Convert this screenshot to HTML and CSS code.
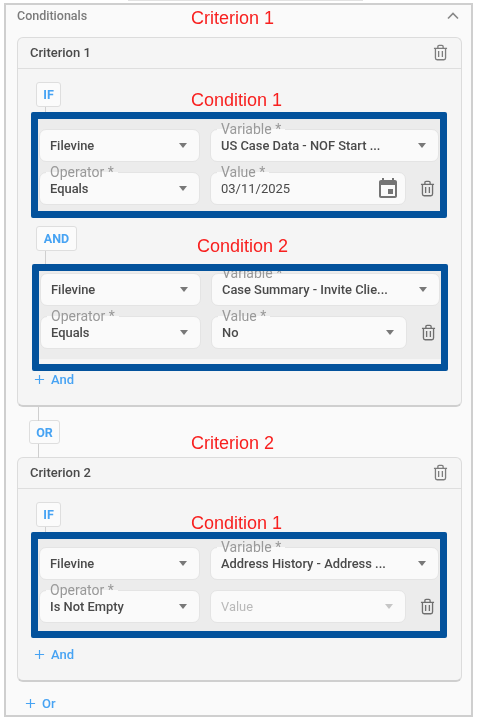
FILE: index.html
```html
<!DOCTYPE html>
<html lang="en">
<head>
    <meta charset="UTF-8" />
    <title>Conditionals</title>
    <link rel="stylesheet" href="styles.css">
</head>
<body>

<svg class="defs" width="0" height="0">
    <symbol id="trash" viewBox="0 0 16 18">
        <path d="M1 4.5h14M5.2 4.5V2.6c0-.8.5-1.3 1.3-1.3h3c.8 0 1.3.5 1.3 1.3v1.9M2.6 4.5v10.4c0 1 .7 1.8 1.8 1.8h7.2c1.1 0 1.8-.8 1.8-1.8V4.5M6 7.5v6.2M10 7.5v6.2" fill="none" stroke="currentColor" stroke-width="1.4"/>
    </symbol>
    <symbol id="calendar" viewBox="0 0 24 24">
        <path d="M17 12h-5v5h5v-5zM16 1v2H8V1H6v2H5c-1.11 0-1.99.9-1.99 2L3 19c0 1.1.89 2 2 2h14c1.1 0 2-.9 2-2V5c0-1.1-.9-2-2-2h-1V1h-2zm3 18H5V8h14v11z" fill="currentColor"/>
    </symbol>
    <symbol id="plus" viewBox="0 0 12 12">
        <path d="M6 1v10M1 6h10" fill="none" stroke="currentColor" stroke-width="1.3"/>
    </symbol>
</svg>

<div class="top-tab"></div>

<div class="panel">
    <div class="panel-head">
        <span>Conditionals</span>
        <svg class="chevron" width="12" height="8" viewBox="0 0 12 8"><path d="M1 6.5l5-5 5 5" fill="none" stroke="currentColor" stroke-width="1.6"/></svg>
    </div>

    <!-- criterion 1 -->
    <div class="card">
        <div class="card-head">
            <span>Criterion 1</span>
            <svg class="trash-lg"><use href="#trash"/></svg>
        </div>
        <div class="card-body">
            <div class="chip chip-if">IF</div>
            <div class="cond">
                <div class="row">
                    <div class="field w-source"><span>Filevine</span><i class="caret"></i></div>
                    <div class="field w-var"><label>Variable *</label><span>US Case Data - NOF Start ...</span><i class="caret"></i></div>
                </div>
                <div class="row">
                    <div class="field w-source"><label>Operator *</label><span>Equals</span><i class="caret"></i></div>
                    <div class="field w-val"><label>Value *</label><span class="plain">03/11/2025</span>
                        <svg class="cal"><use href="#calendar"/></svg>
                    </div>
                    <svg class="trash-sm"><use href="#trash"/></svg>
                </div>
            </div>
            <div class="chip chip-and">AND</div>
            <div class="cond cond-second">
                <div class="row">
                    <div class="field w-source"><span>Filevine</span><i class="caret"></i></div>
                    <div class="field w-var"><label class="label-cut">Variable *</label><span>Case Summary - Invite Clie...</span><i class="caret"></i></div>
                </div>
                <div class="row">
                    <div class="field w-source"><label>Operator *</label><span>Equals</span><i class="caret"></i></div>
                    <div class="field w-val"><label>Value *</label><span>No</span><i class="caret"></i></div>
                    <svg class="trash-sm"><use href="#trash"/></svg>
                </div>
            </div>
            <a class="add add-and-1"><svg><use href="#plus"/></svg>And</a>
        </div>
    </div>

    <div class="chip chip-or">OR</div>

    <!-- criterion 2 -->
    <div class="card card-second">
        <div class="card-head">
            <span>Criterion 2</span>
            <svg class="trash-lg"><use href="#trash"/></svg>
        </div>
        <div class="card-body">
            <div class="chip chip-if">IF</div>
            <div class="cond cond-third">
                <div class="row">
                    <div class="field w-source"><span>Filevine</span><i class="caret"></i></div>
                    <div class="field w-var"><label>Variable *</label><span>Address History - Address ...</span><i class="caret"></i></div>
                </div>
                <div class="row">
                    <div class="field w-source"><label>Operator *</label><span>Is Not Empty</span><i class="caret"></i></div>
                    <div class="field w-val field-off"><span>Value</span><i class="caret"></i></div>
                    <svg class="trash-sm"><use href="#trash"/></svg>
                </div>
            </div>
            <a class="add add-and-2"><svg><use href="#plus"/></svg>And</a>
        </div>
    </div>

    <a class="add add-or"><svg><use href="#plus"/></svg>Or</a>
</div>

<!-- red notes written over the screenshot -->
<div class="note note-1">Criterion 1</div>
<div class="note note-2">Condition 1</div>
<div class="note note-3">Condition 2</div>
<div class="note note-4">Criterion 2</div>
<div class="note note-5">Condition 1</div>

</body>
</html>
```

FILE: styles.css
```css
body {
    margin: 0;
    background: #fff;
    font-family: Roboto, Arial, sans-serif;
    color: #444;
    filter: blur(0.4px);
}
.defs {
    display: block;
    height: 0;
}
.top-tab {
    width: 235px;
    height: 1px;
    margin: 0 0 2px 128px;
    background: #e2e2e2;
}
.panel {
    box-sizing: border-box;
    width: 469px;
    height: 714px;
    margin-left: 4px;
    padding: 0 9px 0 11px;
    border: 2px solid #cfcfcf;
    background: #fafafa;
}
.panel-head {
    display: flex;
    justify-content: space-between;
    height: 22px;
    margin-bottom: 10px;
    padding: 3px 3px 0 0;
    box-sizing: border-box;
    font-size: 12.5px;
    line-height: 15px;
    font-weight: 500;
    color: #7b7b7b;
}
.chevron {
    margin-top: 4px;
    color: #888;
}
.card {
    box-sizing: border-box;
    height: 370px;
    border: 1px solid #dcdcdc;
    border-bottom: 2px solid #cfcfcf;
    border-radius: 6px;
    background: #f5f5f5;
}
.card-second {
    height: 225px;
    margin-top: 13px;
}
.card-head {
    box-sizing: border-box;
    display: flex;
    align-items: center;
    justify-content: space-between;
    height: 31px;
    padding: 0 13px 2px 12px;
    border-bottom: 1px solid #dedede;
    font-size: 13px;
    font-weight: 500;
    color: #4a4a4a;
}
.card-body {
    padding: 13px 0 0 13px;
}
.trash-lg {
    width: 15px;
    height: 17px;
    color: #7d7d7d;
}
.trash-sm {
    flex: none;
    width: 15px;
    height: 17px;
    margin-left: 4px;
    color: #6f6f6f;
}
.chip {
    position: relative;
    box-sizing: border-box;
    display: flex;
    align-items: center;
    justify-content: center;
    height: 25px;
    border: 1px solid #dedede;
    border-radius: 3px;
    background: #fbfbfb;
    font-size: 12.5px;
    font-weight: 700;
    color: #47a3f3;
}
.chip::after {
    content: "";
    position: absolute;
    left: 8px;
    top: 24px;
    width: 1px;
    height: 6px;
    background: #cfcfcf;
}
.chip-if {
    width: 25px;
    margin-left: 5px;
}
.chip-and {
    width: 41px;
    margin: 8px 0 0 5px;
}
.chip-and::after {
    height: 14px;
}
.chip-or {
    width: 31px;
    margin: 13px 0 0 12px;
    height: 24px;
}
.chip-or::before {
    content: "";
    position: absolute;
    left: 8px;
    top: -14px;
    width: 1px;
    height: 14px;
    background: #cfcfcf;
}
.chip-or::after {
    height: 14px;
    top: 23px;
}
.cond {
    position: relative;
    box-sizing: border-box;
    display: flex;
    flex-direction: column;
    gap: 10px;
    width: 416px;
    height: 106px;
    margin-top: 5px;
    padding: 10px 0 0 1px;
    border: 7px solid #03529c;
    border-radius: 2px;
    background: #ececec;
}
.cond-second {
    height: 107px;
    margin: 13px 0 0 1px;
    padding-top: 2px;
    background: linear-gradient(#ececec 88px, #f5f5f5 88px);
}
.cond-third {
    padding-top: 8px;
}
.row {
    display: flex;
    align-items: center;
    gap: 10px;
}
.field {
    position: relative;
    flex: none;
    box-sizing: border-box;
    display: flex;
    align-items: center;
    justify-content: space-between;
    height: 33px;
    padding: 0 12px 0 10px;
    border: 1px solid #e4e4e4;
    border-radius: 7px;
    background: #fafafa;
    font-size: 12.9px;
    font-weight: 500;
    color: #4a4a4a;
}
.field label {
    position: absolute;
    left: 6px;
    top: -9px;
    padding: 0 4px;
    background: linear-gradient(#ececec 50%, #fafafa 50%);
    font-size: 14px;
    font-weight: 400;
    line-height: 16px;
    color: #999;
}
.field .label-cut {
    top: -3px;
    height: 7px;
    overflow: hidden;
    line-height: 4px;
    background: none;
}
.field .plain {
    font-weight: 400;
    font-size: 13px;
}
.w-source {
    width: 161px;
}
.w-var {
    width: 229px;
}
.w-val {
    width: 196px;
}
.field-off {
    color: #b9b9b9;
    font-weight: 400;
}
.field-off .caret {
    border-top-color: #c6c6c6;
}
.caret {
    width: 0;
    height: 0;
    border-left: 4.5px solid transparent;
    border-right: 4.5px solid transparent;
    border-top: 5px solid #787878;
}
.cal {
    width: 24px;
    height: 24px;
    margin-right: -7px;
    color: #747474;
}
.add {
    display: flex;
    align-items: center;
    gap: 6px;
    font-size: 13px;
    font-weight: 500;
    color: #47a3f3;
}
.add svg {
    width: 11px;
    height: 11px;
}
.add-and-1 {
    margin: 0 0 0 3px;
    height: 16px;
}
.add-and-2 {
    margin: 8px 0 0 3px;
    height: 16px;
}
.add-or {
    margin: 13px 0 0 8px;
    height: 16px;
}
.note {
    position: absolute;
    font-family: "Liberation Sans", Arial, sans-serif;
    font-size: 18px;
    line-height: 20px;
    color: #f8201f;
}
.note-1 { left: 191px; top: 8px; }
.note-2 { left: 191px; top: 90px; }
.note-3 { left: 197px; top: 236px; }
.note-4 { left: 191px; top: 433px; }
.note-5 { left: 191px; top: 513px; }
```
